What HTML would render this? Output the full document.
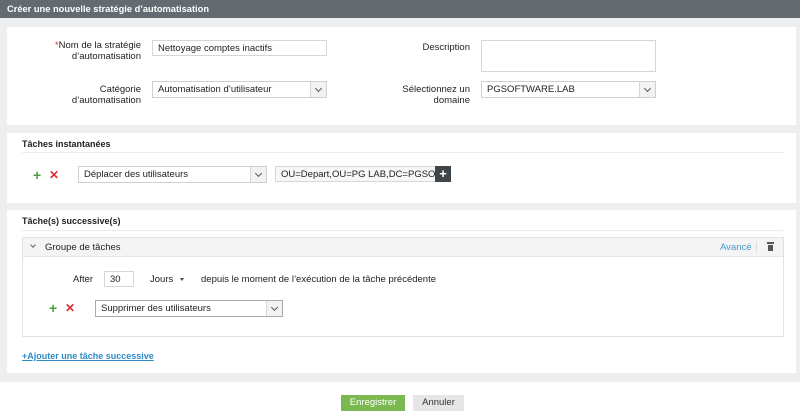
<!DOCTYPE html>
<html><head><meta charset="utf-8"><style>
*{box-sizing:border-box;margin:0;padding:0}
body{width:800px;height:415px;background:#fff;font-family:"Liberation Sans",sans-serif;font-size:9.5px;color:#222;position:relative;overflow:hidden}
.a{position:absolute}
.hdr{left:0;top:0;width:800px;height:18px;background:#646b70;color:#fff;font-weight:bold;font-size:9.3px;padding:4px 0 0 7px}
.bg{left:0;top:18px;width:800px;height:364px;background:#eceeef}
.pn{background:#fff;left:7px;width:789px}
.in{background:#fff;border:1px solid #d6d6d6;height:16px;padding:2px 5px;font-size:9.5px}
.sel{background:#fff;border:1px solid #cfcfcf;height:17px;padding:2px 5px;font-size:9.5px}
.sel:after{content:"";position:absolute;right:0;top:0;width:15px;height:15px;background:#f2f2f2;border-left:1px solid #d6d6d6}
.chev{position:absolute;right:5px;top:4px;width:5px;height:5px;border-right:1.3px solid #555;border-bottom:1.3px solid #555;transform:rotate(45deg);z-index:2}
.lbl{text-align:right;line-height:11px}
.b{font-weight:bold;font-size:9px}
.plus{color:#4a9e3a;font-weight:bold;font-size:14px;line-height:10px}
.x{color:#e03030;font-weight:bold;font-size:12px;line-height:10px}
</style></head><body>
<div class="a hdr">Créer une nouvelle stratégie d’automatisation</div>
<div class="a bg"></div>
<div class="a pn" style="top:27px;height:98px"></div>
<div class="a pn" style="top:133px;height:70px"></div>
<div class="a pn" style="top:210px;height:163px"></div>

<div class="a lbl" style="left:30px;width:111px;top:40px"><span style="color:#d33">*</span>Nom de la stratégie<br>d’automatisation</div>
<div class="a in" style="left:152px;top:40px;width:175px">Nettoyage comptes inactifs</div>
<div class="a lbl" style="left:30px;width:111px;top:84px">Catégorie<br>d’automatisation</div>
<div class="a sel" style="left:152px;top:81px;width:175px">Automatisation d’utilisateur<i class="chev"></i></div>

<div class="a lbl" style="left:360px;width:110px;top:42px">Description</div>
<div class="a in" style="left:481px;top:40px;width:175px;height:32px"></div>
<div class="a lbl" style="left:360px;width:110px;top:84px">Sélectionnez un<br>domaine</div>
<div class="a sel" style="left:481px;top:81px;width:175px">PGSOFTWARE.LAB<i class="chev"></i></div>

<div class="a b" style="left:22px;top:139px">Tâches instantanées</div>
<div class="a" style="left:22px;top:152px;width:761px;height:1px;background:#ececec"></div>
<div class="a plus" style="left:33px;top:170px">+</div>
<div class="a x" style="left:49px;top:170px">✕</div>
<div class="a sel" style="left:78px;top:166px;width:189px">Déplacer des utilisateurs<i class="chev"></i></div>
<div class="a in" style="left:275px;top:166px;width:161px;background:#f7f7f7;overflow:hidden;white-space:nowrap">OU=Depart,OU=PG LAB,DC=PGSOF</div>
<div class="a" style="left:435px;top:166px;width:16px;height:16px;background:#3d454b;color:#fff;font-weight:bold;font-size:13px;line-height:15px;text-align:center">+</div>

<div class="a b" style="left:22px;top:216px">Tâche(s) successive(s)</div>
<div class="a" style="left:22px;top:230px;width:761px;height:1px;background:#ececec"></div>
<div class="a" style="left:22px;top:237px;width:762px;height:100px;border:1px solid #e2e2e2"></div>
<div class="a" style="left:23px;top:238px;width:760px;height:19px;background:#f4f4f4;border-bottom:1px solid #e6e6e6"></div>
<div class="a" style="left:31px;top:243px;width:4px;height:4px;border-right:1px solid #666;border-bottom:1px solid #666;transform:rotate(45deg)"></div>
<div class="a" style="left:45px;top:242px">Groupe de tâches</div>
<div class="a" style="left:720px;top:242px;color:#4a9ad0">Avancé</div>
<div class="a" style="left:756px;top:242px;width:1px;height:10px;background:#ddd"></div>
<div class="a" style="left:767px;top:242px;width:7px;height:2px;background:#555"></div>
<div class="a" style="left:768px;top:245px;width:5px;height:6px;background:#555"></div>

<div class="a" style="left:73px;top:274px">After</div>
<div class="a in" style="left:104px;top:271px;width:30px">30</div>
<div class="a" style="left:150px;top:274px">Jours</div>
<div class="a" style="left:180px;top:278px;border-left:2.5px solid transparent;border-right:2.5px solid transparent;border-top:3px solid #444"></div>
<div class="a" style="left:201px;top:274px">depuis le moment de l’exécution de la tâche précédente</div>
<div class="a plus" style="left:49px;top:303px">+</div>
<div class="a x" style="left:65px;top:303px">✕</div>
<div class="a sel" style="left:95px;top:300px;width:188px;border-color:#aaa">Supprimer des utilisateurs<i class="chev"></i></div>

<div class="a" style="left:22px;top:351px;color:#2e8ac6;font-weight:bold;font-size:9px;text-decoration:underline">+Ajouter une tâche successive</div>

<div class="a" style="left:341px;top:395px;width:64px;height:16px;background:#7cb850;color:#fff;text-align:center;line-height:16px">Enregistrer</div>
<div class="a" style="left:413px;top:395px;width:51px;height:16px;background:#e6e6e6;color:#333;text-align:center;line-height:16px">Annuler</div>
</body></html>
